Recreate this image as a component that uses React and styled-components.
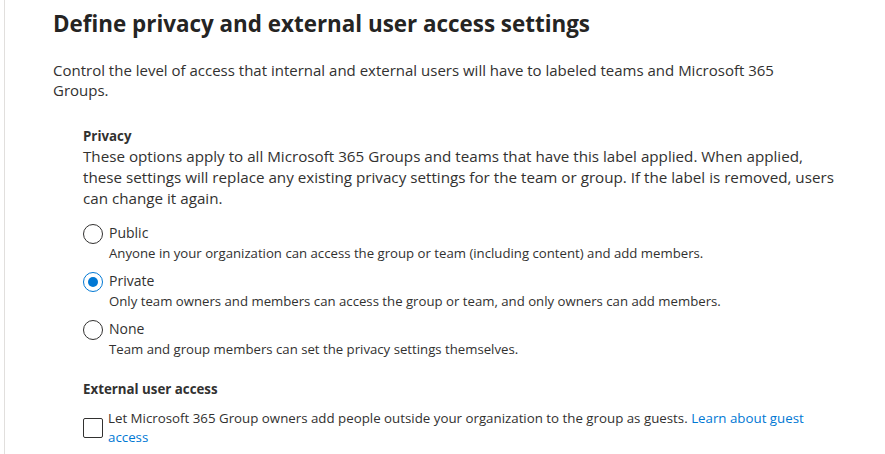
import React, { useState } from 'react';
import styled, { createGlobalStyle } from 'styled-components';

const GlobalStyle = createGlobalStyle`
  html, body {
    margin: 0;
    padding: 0;
    background: #ffffff;
  }
  body {
    font-family: 'Open Sans', 'Liberation Sans', sans-serif;
    color: #323130;
    overflow: hidden;
  }
`;

const Page = styled.main`
  margin-left: 4px;
  border-left: 1px solid #e1dfdd;
  min-height: 454px;
  padding: 8px 0 0 48px;
  width: 781px;
`;

const Title = styled.h1`
  margin: 0;
  font-size: 22.4px;
  font-weight: 700;
  line-height: 32px;
  color: #252423;
`;

const Intro = styled.p`
  margin: 20px 0 0;
  max-width: 760px;
  font-size: 15px;
  line-height: 20px;
`;

const Section = styled.section`
  padding-left: 30px;
  margin-top: ${(p) => p.$top}px;
`;

const SectionTitle = styled.h2`
  margin: 0;
  font-size: 13.3px;
  font-weight: 700;
  line-height: 18px;
`;

const SectionText = styled.p`
  margin: 1px 0 0;
  font-size: 15.2px;
  line-height: 21px;
`;

const Options = styled.div`
  display: flex;
  flex-direction: column;
  gap: 8px;
  margin-top: 14px;
`;

const Option = styled.label`
  display: grid;
  grid-template-columns: 20px 1fr;
  column-gap: 6px;
  cursor: pointer;
`;

const Radio = styled.span`
  width: 20px;
  height: 20px;
  box-sizing: border-box;
  border-radius: 50%;
  border: 1px solid ${(p) => (p.$checked ? '#0078d4' : '#323130')};
  display: flex;
  align-items: center;
  justify-content: center;
  margin-top: 1px;

  &::after {
    content: '';
    width: 10px;
    height: 10px;
    border-radius: 50%;
    background: #0078d4;
    display: ${(p) => (p.$checked ? 'block' : 'none')};
  }
`;

const OptionLabel = styled.div`
  font-size: 14px;
  line-height: 20px;
`;

const OptionDesc = styled.div`
  grid-column: 2;
  font-size: 13.2px;
  line-height: 19px;
`;

const CheckRow = styled.label`
  display: grid;
  grid-template-columns: 20px 1fr;
  column-gap: 5px;
  margin-top: 11px;
  align-items: center;
`;

const Box = styled.span`
  width: 20px;
  height: 20px;
  box-sizing: border-box;
  border: 1px solid #323130;
  border-radius: 2px;
`;

const CheckText = styled.p`
  margin: 0;
  font-size: 13.3px;
  line-height: 19px;
`;

const Link = styled.a`
  color: #0078d4;
  text-decoration: none;
`;

const options = [
  {
    id: 'public',
    label: 'Public',
    desc: 'Anyone in your organization can access the group or team (including content) and add members.',
  },
  {
    id: 'private',
    label: 'Private',
    desc: 'Only team owners and members can access the group or team, and only owners can add members.',
  },
  {
    id: 'none',
    label: 'None',
    desc: 'Team and group members can set the privacy settings themselves.',
  },
];

export default function App() {
  const [privacy, setPrivacy] = useState('private');

  return (
    <>
      <GlobalStyle />
      <Page>
        <Title>Define privacy and external user access settings</Title>
        <Intro>
          Control the level of access that internal and external users will have to labeled teams
          and Microsoft 365 Groups.
        </Intro>

        <Section $top={27}>
          <SectionTitle>Privacy</SectionTitle>
          <SectionText>
            These options apply to all Microsoft 365 Groups and teams that have this label applied.
            When applied, these settings will replace any existing privacy settings for the team or
            group. If the label is removed, users can change it again.
          </SectionText>
          <Options>
            {options.map((o) => (
              <Option key={o.id} onClick={() => setPrivacy(o.id)}>
                <Radio $checked={privacy === o.id} />
                <OptionLabel>{o.label}</OptionLabel>
                <OptionDesc>{o.desc}</OptionDesc>
              </Option>
            ))}
          </Options>
        </Section>

        <Section $top={21}>
          <SectionTitle>External user access</SectionTitle>
          <CheckRow>
            <Box />
            <CheckText>
              Let Microsoft 365 Group owners add people outside your organization to the group as
              guests. <Link href="#">Learn about guest access</Link>
            </CheckText>
          </CheckRow>
        </Section>
      </Page>
    </>
  );
}
